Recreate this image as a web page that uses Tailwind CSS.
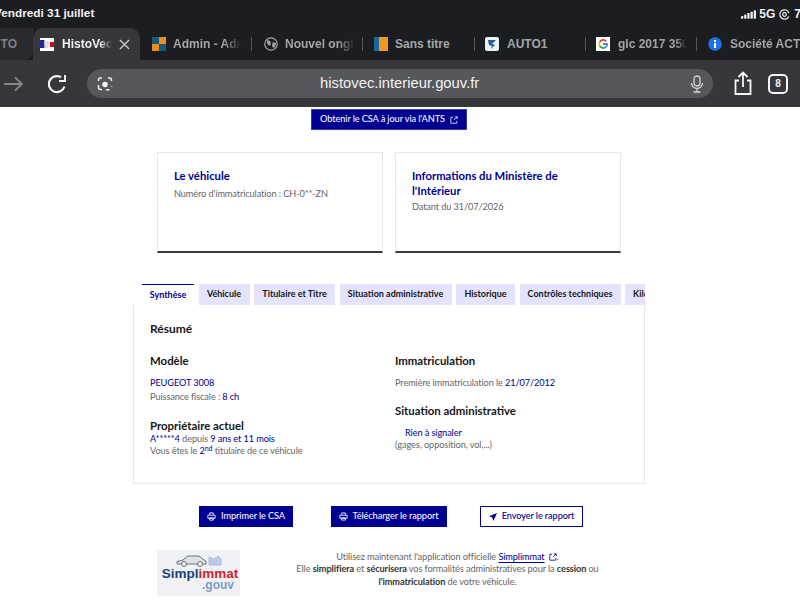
<!doctype html>
<html lang="fr"><head><meta charset="utf-8">
<script src="https://cdn.jsdelivr.net/npm/@tailwindcss/browser@4"></script>
</head>
<body class="w-[800px] h-[600px] overflow-hidden bg-white font-['Lato',sans-serif]">
<header class="h-[107px] bg-[#1c1d21] flex flex-col font-['Liberation_Sans',sans-serif] overflow-hidden">
  <div class="h-[28px] flex justify-between items-center relative text-[#f2f2f3] text-[11.800px] font-semibold">
    <span class="-ml-[6px]">Vendredi 31 juillet</span>
    <div class="flex items-center gap-[3px] -mr-[1px] text-[12px]">
      <svg width="15" height="9" viewBox="0 0 16 9" fill="#f2f2f3"><rect x="0" y="6" width="2.400" height="3" rx=".5"/><rect x="3.400" y="4.500" width="2.400" height="4.500" rx=".5"/><rect x="6.800" y="3" width="2.400" height="6" rx=".5"/><rect x="10.200" y="1.500" width="2.400" height="7.500" rx=".5"/><rect x="13.600" y="0" width="2.400" height="9" rx=".5"/></svg>
      <span>5G</span>
      <svg width="11" height="11" viewBox="0 0 11 11" fill="none" stroke="#f2f2f3" stroke-width="1.200" class="ml-[1px]"><path d="M9.800 7.500A4.700 4.700 0 1 1 10 4"/><circle cx="5.500" cy="5.500" r="1.800"/></svg>
      <span class="ml-[1px]">7</span>
    </div>
  </div>
  <div class="h-[32px] flex items-center text-[12px] font-semibold text-[#a4a5a8] relative">
    <div class="w-[33px] h-full bg-[#2a2b2f] rounded-br-[9px] flex items-center justify-end pr-[16px] shrink-0"><span class="text-[#7f8084]">TO</span></div>
    <div class="w-[107px] h-full shrink-0 bg-[#36373b] rounded-t-[10px] flex items-center pl-[7px] text-[#f1f1f2]">
      <svg width="14" height="13" viewBox="0 0 14 13" class="shrink-0"><rect width="14" height="13" fill="#fff"/><rect width="4.500" height="8" y="2" fill="#23239a"/><rect x="10" y="4" width="4" height="5" fill="#e1000f"/><path d="M4 3h4l2 3-2 1v3H5z" fill="#dcdcdc"/></svg>
      <span class="ml-[8px] w-[50px] overflow-hidden whitespace-nowrap [mask-image:linear-gradient(to_right,black_75%,transparent)]">HistoVec</span>
      <svg width="11" height="11" viewBox="0 0 12 12" class="ml-[7px]" stroke="#c9c9cb" stroke-width="1.500" fill="none"><path d="M1 1l10 10M11 1L1 11"/></svg>
    </div>
    <div class="w-[112px] shrink-0 flex items-center pl-[12px] relative">
      <svg width="14" height="14" viewBox="0 0 14 14" class="shrink-0"><rect width="7" height="7" fill="#16597f"/><rect x="7" width="7" height="7" fill="#ee8b1d"/><rect y="7" width="7" height="7" fill="#ee8b1d"/><rect x="7" y="7" width="7" height="7" fill="#16597f"/></svg>
      <span class="ml-[7px] w-[68px] overflow-hidden whitespace-nowrap [mask-image:linear-gradient(to_right,black_75%,transparent)]">Admin - Admin</span>
      <i class="absolute right-0 w-[1.500px] h-[14px] bg-[#55565a]"></i>
    </div>
    <div class="w-[111px] shrink-0 flex items-center pl-[12px] relative">
      <svg width="14" height="14" viewBox="0 0 14 14" class="shrink-0"><circle cx="7" cy="7" r="6.200" fill="none" stroke="#a4a5a8" stroke-width="1.200"/><path d="M3 3l3 1 1 3-2 2-2-3zM9 5l3 1-1 4-2 1-1-3z" fill="#a4a5a8"/></svg>
      <span class="ml-[7px] w-[70px] overflow-hidden whitespace-nowrap [mask-image:linear-gradient(to_right,black_75%,transparent)]">Nouvel onglet</span>
      <i class="absolute right-0 w-[1.500px] h-[14px] bg-[#55565a]"></i>
    </div>
    <div class="w-[112px] shrink-0 flex items-center pl-[11px] relative">
      <svg width="14" height="14" viewBox="0 0 14 14" class="shrink-0"><rect width="5" height="14" fill="#16699f"/><rect x="5" width="9" height="14" fill="#f09a22"/></svg>
      <span class="ml-[7px] whitespace-nowrap">Sans titre</span>
      <i class="absolute right-0 w-[1.500px] h-[14px] bg-[#55565a]"></i>
    </div>
    <div class="w-[111px] shrink-0 flex items-center pl-[10px] relative">
      <svg width="14" height="14" viewBox="0 0 14 14" class="shrink-0"><rect width="14" height="14" rx="2" fill="#eef1f6"/><path d="M3 3h8L7 7l3 1-4 4 1-3-3-1z" fill="#1d5fa8"/></svg>
      <span class="ml-[8px]">AUTO1</span>
      <i class="absolute right-0 w-[1.500px] h-[14px] bg-[#55565a]"></i>
    </div>
    <div class="w-[111px] shrink-0 flex items-center pl-[10px] relative">
      <svg width="14" height="14" viewBox="0 0 14 14" class="shrink-0" fill="none" stroke-width="1.800"><rect width="14" height="14" fill="#fff" stroke="none"/><path d="M10.200 4.300A4 4 0 0 0 3.700 5" stroke="#ea4335"/><path d="M3.700 5a4 4 0 0 0 0 4" stroke="#fbbc05"/><path d="M3.700 9a4 4 0 0 0 6 1.100" stroke="#34a853"/><path d="M9.700 10.100A3.500 3.500 0 0 0 11 7H7" stroke="#4285f4"/></svg>
      <span class="ml-[8px] w-[68px] overflow-hidden whitespace-nowrap [mask-image:linear-gradient(to_right,black_85%,transparent)]">glc 2017 350</span>
      <i class="absolute right-0 w-[1.500px] h-[14px] bg-[#55565a]"></i>
    </div>
    <div class="flex-1 flex items-center pl-[11px] min-w-0">
      <svg width="14" height="14" viewBox="0 0 14 14" class="shrink-0"><circle cx="7" cy="7" r="6.800" fill="#1a73e8"/><rect x="6" y="6" width="2" height="5" fill="#fff"/><rect x="6" y="3" width="2" height="2" fill="#fff"/></svg>
      <span class="ml-[8px] whitespace-nowrap [mask-image:linear-gradient(to_right,black_85%,transparent)]">Société ACTIF</span>
    </div>
  </div>
  <div class="flex-1 bg-[#36373b] flex items-center">
    <svg width="20" height="16" viewBox="0 0 20 16" class="ml-[3px] shrink-0" fill="none" stroke="#85868a" stroke-width="1.800"><path d="M1 8h18M12 1.500 19 8l-7 6.500"/></svg>
    <svg width="20" height="20" viewBox="0 0 20 20" class="ml-[25px] shrink-0" fill="none" stroke="#f4f4f5" stroke-width="2.200"><path d="M16.500 12.500A8 8 0 1 1 13 3.200"/><path d="M17 1v6h-6" stroke-width="2"/></svg>
    <div class="ml-[19px] w-[626px] h-[29px] rounded-full bg-[#56575b] shrink-0 flex items-center relative">
      <svg width="16" height="16" viewBox="0 0 16 16" class="ml-[10px]" fill="none" stroke="#f0f0f1" stroke-width="1.500"><path d="M5 2H3.500A2 2 0 0 0 1.500 4v1M11 2h1.500a2 2 0 0 1 2 2v1M1.500 9v2.500a2 2 0 0 0 2 2H5M14.500 10v.5M9 13.700h3.500"/><circle cx="8" cy="8.500" r="2" fill="#f0f0f1"/></svg>
      <span class="absolute left-[233px] text-[14.800px] font-normal text-[#f2f2f3]">histovec.interieur.gouv.fr</span>
      <svg width="14" height="18" viewBox="0 0 14 18" class="ml-auto mr-[9px]" fill="none" stroke="#d6d6d8" stroke-width="1.300"><rect x="4" y="1" width="6" height="10" rx="3"/><path d="M1.500 8a5.500 5.500 0 0 0 11 0M7 13.500V17M3.500 17h7"/></svg>
    </div>
    <svg width="20" height="25" viewBox="0 0 20 25" class="ml-[20px] shrink-0" fill="none" stroke="#f4f4f5" stroke-width="1.800"><path d="M6 9.500H2.500v13.500h15V9.500H14M10 16V2M5.500 6 10 1.500 14.500 6"/></svg>
    <div class="ml-[15px] w-[20px] h-[20px] shrink-0 border-[2px] border-[#f4f4f5] rounded-[5px] flex items-center justify-center text-[#f4f4f5] text-[10px] font-bold">8</div>
  </div>
</header>
<main class="text-[#666666] text-[9.200px] tracking-[-0.1px] leading-[12.500px] relative h-[493px]">
  <div class="flex justify-center pt-[2px]">
    <a class="w-[156px] h-[21px] ml-[-22px] flex items-center justify-center gap-[4px] bg-[#000091] text-[#f5f5fe] font-medium border border-[#3a3ab0]">Obtenir le CSA à jour via l'ANTS
      <svg width="8" height="8" viewBox="0 0 10 10" class="ml-[1px]" fill="none" stroke="#f5f5fe" stroke-width="1"><path d="M4 1.500H1v7.500h7.500V6M6 1h3v3M9 1 5 5"/></svg>
    </a>
  </div>
  <div class="flex gap-[12px] ml-[157px] mt-[22px]">
    <section class="w-[226px] h-[101px] border border-[#e8e8e8] border-b-[2px] border-b-[#3a3a3a] pt-[16px] px-[16px]">
      <h2 class="text-[#000091] text-[11.300px] tracking-normal font-bold leading-[14.500px]">Le véhicule</h2>
      <p class="mt-[4px]">Numéro d'immatriculation : CH-0**-ZN</p>
    </section>
    <section class="w-[226px] h-[101px] border border-[#e8e8e8] border-b-[2px] border-b-[#3a3a3a] pt-[16px] pl-[16px] pr-[50px]">
      <h2 class="text-[#000091] text-[11.300px] tracking-normal font-bold leading-[14.500px]">Informations du Ministère de l'Intérieur</h2>
      <p class="mt-[3px]">Datant du 31/07/2026</p>
    </section>
  </div>
  <div class="ml-[133px] w-[512px] mt-[31px]">
    <div class="flex h-[21px] pl-[9px] gap-[4.500px] overflow-hidden text-[#161616] font-bold text-[9px] tracking-normal whitespace-nowrap relative z-10">
      <div class="w-[52px] bg-white border-t-[1.500px] border-[#000091] text-[#000091] flex items-center justify-center shrink-0">Synthèse</div>
      <div class="w-[51px] bg-[#e3e3fd] flex items-center justify-center shrink-0">Véhicule</div>
      <div class="w-[81px] bg-[#e3e3fd] flex items-center justify-center shrink-0">Titulaire et Titre</div>
      <div class="w-[112px] bg-[#e3e3fd] flex items-center justify-center shrink-0">Situation administrative</div>
      <div class="w-[59px] bg-[#e3e3fd] flex items-center justify-center shrink-0">Historique</div>
      <div class="w-[101px] bg-[#e3e3fd] flex items-center justify-center shrink-0">Contrôles techniques</div>
      <div class="w-[60px] bg-[#e3e3fd] flex items-center pl-[8px] shrink-0">Kilométrage</div>
    </div>
    <div class="h-[179px] border border-t-0 border-[#e8e8e8] pl-[16px] pt-[16px] relative">
      <h3 class="text-[#161616] text-[12px] tracking-normal font-bold leading-[15px]">Résumé</h3>
      <div class="flex mt-[18px]">
        <div class="w-[245px]">
          <h4 class="text-[#161616] text-[11.400px] tracking-normal font-bold leading-[14px]">Modèle</h4>
          <p class="text-[#000091] mt-[8.500px]">PEUGEOT 3008</p>
          <p class="mt-[2px]">Puissance fiscale : <span class="text-[#000091]">8 ch</span></p>
          <h4 class="text-[#161616] text-[11.400px] tracking-normal font-bold leading-[14px] mt-[15px]">Propriétaire actuel</h4>
          <p class="text-[#000091]">A*****4 <span class="text-[#666666]">depuis</span> 9 ans et 11 mois</p>
          <p>Vous êtes le <span class="text-[#000091]">2<sup class="text-[7px]">nd</sup></span> titulaire de ce véhicule</p>
        </div>
        <div>
          <h4 class="text-[#161616] text-[11.400px] tracking-normal font-bold leading-[14px]">Immatriculation</h4>
          <p class="mt-[8.500px]">Première immatriculation le <span class="text-[#000091]">21/07/2012</span></p>
          <h4 class="text-[#161616] text-[11.400px] tracking-normal font-bold leading-[14px] mt-[15px]">Situation administrative</h4>
          <p class="text-[#000091] mt-[8.500px] ml-[10px]">Rien à signaler</p>
          <p>(gages, opposition, vol,...)</p>
        </div>
      </div>
    </div>
  </div>
  <div class="flex ml-[199px] mt-[22px] font-medium">
    <a class="w-[94px] h-[21px] bg-[#000091] text-[#f5f5fe] flex items-center justify-center gap-[5px]"><svg width="9" height="9" viewBox="0 0 10 10" fill="none" stroke="#f5f5fe" stroke-width="1"><path d="M3 3V1h4v2M1 3.500h8v3.500H1zM3 6.500h4V9H3z"/></svg>Imprimer le CSA</a>
    <a class="ml-[38px] w-[116px] h-[21px] bg-[#000091] text-[#f5f5fe] flex items-center justify-center gap-[4px]"><svg width="9" height="9" viewBox="0 0 10 10" fill="none" stroke="#f5f5fe" stroke-width="1"><path d="M3 3V1h4v2M1 3.500h8v3.500H1zM3 6.500h4V9H3z"/></svg>Télécharger le rapport</a>
    <a class="ml-[33px] w-[103px] h-[21px] border border-[#000091] text-[#000091] flex items-center justify-center gap-[5px]"><svg width="8" height="8" viewBox="0 0 10 10" fill="#000091"><path d="M10 0 0 4l4 1.500L5.500 10z"/></svg>Envoyer le rapport</a>
  </div>
  <div class="flex ml-[157px] mt-[23px]">
    <div class="w-[83px] h-[46px] bg-[#f0f1f4] flex flex-col items-center shrink-0 leading-none relative tracking-normal">
      <svg width="50" height="15" viewBox="0 0 50 15" class="mt-[3px]" fill="none" stroke="#5c6570" stroke-width=".9"><path d="M3 11V8.500l6-1.500 5-4h11l5 4 2 1v3H3z" fill="#dfe2e8"/><circle cx="10" cy="11" r="2.500" fill="#f0f1f4"/><circle cx="26" cy="11" r="2.500" fill="#f0f1f4"/><path d="M35 4l5 2 4-3 3 3v6h-12z" fill="#b9cbe4" stroke="#a8bbd8"/></svg>
      <span class="ml-[3px] text-[13.500px] font-bold text-[#1c3f7a] font-['Liberation_Sans',sans-serif] -mt-[1px] leading-[13px]">Simpl<span class="text-[#d0212e]">immat</span></span>
      <span class="self-end mr-[6px] text-[12px] font-bold text-[#7f9cc5] font-['Liberation_Sans',sans-serif] leading-[11px]">.gouv</span>
    </div>
    <p class="ml-[30px] w-[355px] pt-[0.500px] text-center">Utilisez maintenant l'application officielle <span class="text-[#000091] underline underline-offset-2">Simplimmat</span> <svg width="8" height="8" viewBox="0 0 10 10" class="inline ml-[2px]" fill="none" stroke="#000091" stroke-width="1"><path d="M4 1.500H1v7.500h7.500V6M6 1h3v3M9 1 5 5"/></svg>.<br>Elle <b class="text-[#333]">simplifiera</b> et <b class="text-[#333]">sécurisera</b> vos formalités administratives pour la <b class="text-[#333]">cession</b> ou<br><b class="text-[#333]">l'immatriculation</b> de votre véhicule.</p>
  </div>
</main>
</body></html>
